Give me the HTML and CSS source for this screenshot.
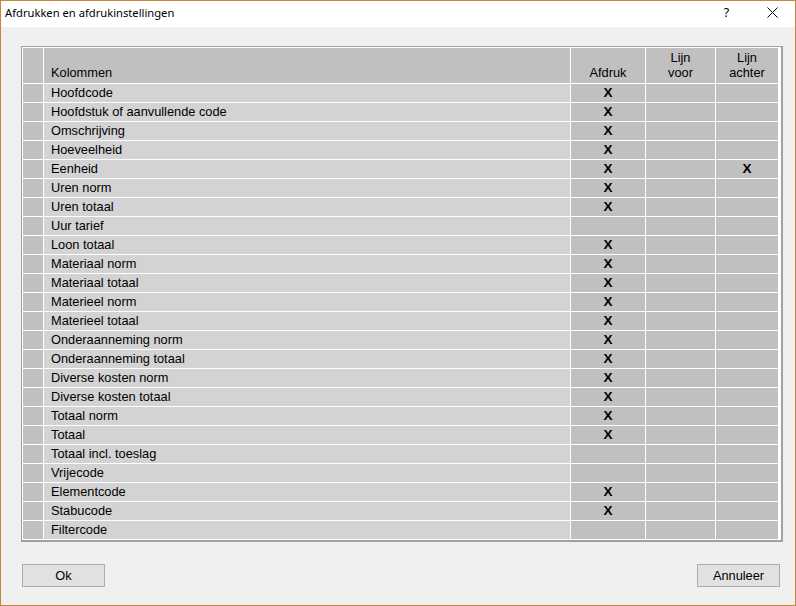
FILE: index.html
```html
<!DOCTYPE html>
<html>
<head>
<meta charset="utf-8">
<link rel="stylesheet" href="styles.css">
</head>
<body>
<div class="window">
  <div class="titlebar">
    <span class="title">Afdrukken en afdrukinstellingen</span>
    <span class="help">?</span>
    <span class="close"><svg width="11" height="11" viewBox="0 0 11 11"><path d="M0.5 0.5 L10.5 10.5 M10.5 0.5 L0.5 10.5" stroke="#000" stroke-width="1" fill="none"/></svg></span>
  </div>
  <div class="content">
    <div class="grid">
      <div class="ind hdr"></div>
      <div class="hdr name">Kolommen</div>
      <div class="hdr ctr">Afdruk</div>
      <div class="hdr ctr">Lijn<br>voor</div>
      <div class="hdr ctr">Lijn<br>achter</div>

      <div class="ind"></div><div class="name">Hoofdcode</div><div class="c">X</div><div class="c"></div><div class="c"></div>
      <div class="ind"></div><div class="name">Hoofdstuk of aanvullende code</div><div class="c">X</div><div class="c"></div><div class="c"></div>
      <div class="ind"></div><div class="name">Omschrijving</div><div class="c">X</div><div class="c"></div><div class="c"></div>
      <div class="ind"></div><div class="name">Hoeveelheid</div><div class="c">X</div><div class="c"></div><div class="c"></div>
      <div class="ind"></div><div class="name">Eenheid</div><div class="c">X</div><div class="c"></div><div class="c">X</div>
      <div class="ind"></div><div class="name">Uren norm</div><div class="c">X</div><div class="c"></div><div class="c"></div>
      <div class="ind"></div><div class="name">Uren totaal</div><div class="c">X</div><div class="c"></div><div class="c"></div>
      <div class="ind"></div><div class="name">Uur tarief</div><div class="c"></div><div class="c"></div><div class="c"></div>
      <div class="ind"></div><div class="name">Loon totaal</div><div class="c">X</div><div class="c"></div><div class="c"></div>
      <div class="ind"></div><div class="name">Materiaal norm</div><div class="c">X</div><div class="c"></div><div class="c"></div>
      <div class="ind"></div><div class="name">Materiaal totaal</div><div class="c">X</div><div class="c"></div><div class="c"></div>
      <div class="ind"></div><div class="name">Materieel norm</div><div class="c">X</div><div class="c"></div><div class="c"></div>
      <div class="ind"></div><div class="name">Materieel totaal</div><div class="c">X</div><div class="c"></div><div class="c"></div>
      <div class="ind"></div><div class="name">Onderaanneming norm</div><div class="c">X</div><div class="c"></div><div class="c"></div>
      <div class="ind"></div><div class="name">Onderaanneming totaal</div><div class="c">X</div><div class="c"></div><div class="c"></div>
      <div class="ind"></div><div class="name">Diverse kosten norm</div><div class="c">X</div><div class="c"></div><div class="c"></div>
      <div class="ind"></div><div class="name">Diverse kosten totaal</div><div class="c">X</div><div class="c"></div><div class="c"></div>
      <div class="ind"></div><div class="name">Totaal norm</div><div class="c">X</div><div class="c"></div><div class="c"></div>
      <div class="ind"></div><div class="name">Totaal</div><div class="c">X</div><div class="c"></div><div class="c"></div>
      <div class="ind"></div><div class="name">Totaal incl. toeslag</div><div class="c"></div><div class="c"></div><div class="c"></div>
      <div class="ind"></div><div class="name">Vrijecode</div><div class="c"></div><div class="c"></div><div class="c"></div>
      <div class="ind"></div><div class="name">Elementcode</div><div class="c">X</div><div class="c"></div><div class="c"></div>
      <div class="ind"></div><div class="name">Stabucode</div><div class="c">X</div><div class="c"></div><div class="c"></div>
      <div class="ind"></div><div class="name">Filtercode</div><div class="c"></div><div class="c"></div><div class="c"></div>
    </div>
    <div class="buttons">
      <button class="btn">Ok</button>
      <button class="btn">Annuleer</button>
    </div>
  </div>
</div>
</body>
</html>
```

FILE: styles.css
```css
html, body {
  margin: 0;
  padding: 0;
}
body {
  width: 796px;
  height: 606px;
  overflow: hidden;
  background: #f0f0f0;
}
.window {
  box-sizing: border-box;
  width: 796px;
  height: 606px;
  border: 1px solid #c9843b;
  background: #f0f0f0;
  display: flex;
  flex-direction: column;
}
.titlebar {
  box-sizing: border-box;
  height: 26px;
  padding-bottom: 3px;
  background: #ffffff;
  display: flex;
  align-items: center;
  font-family: "Noto Sans", "Open Sans", sans-serif;
  font-size: 11.2px;
  color: #000;
}
.title {
  padding-left: 4px;
  flex: 1;
}
.help {
  width: 45px;
  text-align: center;
  font-size: 12.5px;
}
.close {
  width: 46px;
  display: flex;
  justify-content: center;
  align-items: center;
}
.content {
  padding: 19px 0 0 20px;
  display: flex;
  flex-direction: column;
}
.grid {
  width: 757px;
  display: grid;
  grid-template-columns: 20px 526px 74px 69px 62px;
  grid-template-rows: 35px repeat(24, 18px);
  gap: 1px;
  padding: 1px;
  background: #ffffff;
  border-left: 1px solid #a0a0a0;
  border-top: 1px solid #a0a0a0;
  border-right: 2px solid #a0a0a0;
  border-bottom: 2px solid #a0a0a0;
  font-family: "Liberation Sans", Arial, sans-serif;
  font-size: 12.8px;
  color: #000;
}
.grid > div {
  background: #c0c0c0;
  line-height: 18px;
  white-space: nowrap;
}
.grid > .name {
  background: #d3d3d3;
  padding-left: 7px;
}
.grid > .ind {
  background: #c0c0c0;
}
.grid > .hdr {
  background: #c0c0c0;
  line-height: 15px;
  display: flex;
  flex-direction: column;
  justify-content: flex-end;
  padding-bottom: 3px;
}
.grid > .hdr.name {
  background: #c0c0c0;
}
.grid > .ctr {
  text-align: center;
  align-items: center;
}
.grid > .c {
  text-align: center;
  font-weight: bold;
  font-size: 13.5px;
}
.buttons {
  margin-top: 22px;
  margin-left: 1px;
  width: 758px;
  display: flex;
  justify-content: space-between;
}
.btn {
  width: 83px;
  height: 23px;
  margin: 0;
  padding: 0;
  background: #e1e1e1;
  border: 1px solid #adadad;
  font-family: "Liberation Sans", Arial, sans-serif;
  font-size: 12.8px;
  color: #000;
}
```
